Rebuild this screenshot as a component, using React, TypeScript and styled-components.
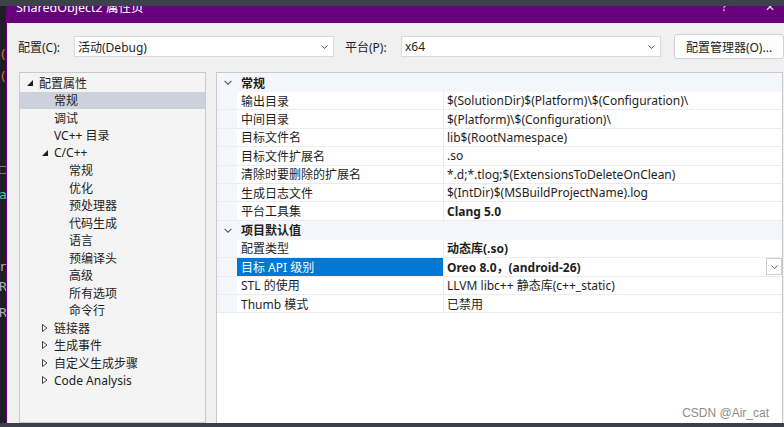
import React from 'react';
import styled, { createGlobalStyle } from 'styled-components';

const GlobalStyle = createGlobalStyle`
  html, body {
    margin: 0;
    padding: 0;
    background: #3b404b;
  }
  body {
    font-family: "Noto Sans", "Noto Sans CJK SC", sans-serif;
    font-size: 12px;
    color: #1e1e1e;
  }
`;

type TreeNode = {
  label: string;
  level: number;
  arrow?: 'open' | 'closed';
  selected?: boolean;
};

const treeItems: TreeNode[] = [
  { label: '配置属性', level: 0, arrow: 'open' },
  { label: '常规', level: 1, selected: true },
  { label: '调试', level: 1 },
  { label: 'VC++ 目录', level: 1 },
  { label: 'C/C++', level: 1, arrow: 'open' },
  { label: '常规', level: 2 },
  { label: '优化', level: 2 },
  { label: '预处理器', level: 2 },
  { label: '代码生成', level: 2 },
  { label: '语言', level: 2 },
  { label: '预编译头', level: 2 },
  { label: '高级', level: 2 },
  { label: '所有选项', level: 2 },
  { label: '命令行', level: 2 },
  { label: '链接器', level: 1, arrow: 'closed' },
  { label: '生成事件', level: 1, arrow: 'closed' },
  { label: '自定义生成步骤', level: 1, arrow: 'closed' },
  { label: 'Code Analysis', level: 1, arrow: 'closed' },
];

type Prop = { name: string; value: string; bold?: boolean; selected?: boolean };
type Section = { title: string; props: Prop[] };

const sections: Section[] = [
  {
    title: '常规',
    props: [
      { name: '输出目录', value: '$(SolutionDir)$(Platform)\\$(Configuration)\\' },
      { name: '中间目录', value: '$(Platform)\\$(Configuration)\\' },
      { name: '目标文件名', value: 'lib$(RootNamespace)' },
      { name: '目标文件扩展名', value: '.so' },
      { name: '清除时要删除的扩展名', value: '*.d;*.tlog;$(ExtensionsToDeleteOnClean)' },
      { name: '生成日志文件', value: '$(IntDir)$(MSBuildProjectName).log' },
      { name: '平台工具集', value: 'Clang 5.0', bold: true },
    ],
  },
  {
    title: '项目默认值',
    props: [
      { name: '配置类型', value: '动态库(.so)', bold: true },
      { name: '目标 API 级别', value: 'Oreo 8.0，(android-26)', bold: true, selected: true },
      { name: 'STL 的使用', value: 'LLVM libc++ 静态库(c++_static)' },
      { name: 'Thumb 模式', value: '已禁用' },
    ],
  },
];

// bits of the code editor that peek out behind the dialog
const editorGlyphs = [
  { ch: '(', top: 42, color: '#e0645a' },
  { ch: '(', top: 8, color: '#e0645a' },
  { ch: '□', top: 78, color: '#8a8a8a' },
  { ch: 'a', top: 12, color: '#3ec9b4' },
  { ch: 'r', top: 58, color: '#b0b0b0' },
  { ch: 'R', top: 6, color: '#b0b0b0' },
  { ch: 'R', top: 12, color: '#b0b0b0' },
];

const Chevron = ({ size = 7 }: { size?: number }) => (
  <svg width={size} height={Math.round(size * 0.6)} viewBox="0 0 7 4" fill="none">
    <path d="M0.5 0.5 L3.5 3.5 L6.5 0.5" stroke="#5a5a5a" strokeWidth="1" />
  </svg>
);

const TreeArrow = ({ kind }: { kind: 'open' | 'closed' }) =>
  kind === 'open' ? (
    <svg width="6" height="6" viewBox="0 0 6 6">
      <polygon points="6,0 6,6 0,6" fill="#1e1e1e" />
    </svg>
  ) : (
    <svg width="6" height="8" viewBox="0 0 6 8">
      <polygon points="0.5,0.5 5,4 0.5,7.5" fill="none" stroke="#444" strokeWidth="1" />
    </svg>
  );

export default function App() {
  return (
    <>
      <GlobalStyle />
      <Screen>
        <TopStrip />
        <Middle>
          <EditorStrip>
            {editorGlyphs.map((g, i) => (
              <Glyph key={i} top={g.top} color={g.color}>
                {g.ch}
              </Glyph>
            ))}
          </EditorStrip>
          <Dialog>
            <TitleBar>
              <TitleText>SharedObject2 属性页</TitleText>
              <TitleButtons>
                <span>?</span>
                <span>✕</span>
              </TitleButtons>
            </TitleBar>
            <Body>
              <Toolbar>
                <Label>配置(C):</Label>
                <Combo>
                  <span>活动(Debug)</span>
                  <Chevron />
                </Combo>
                <Label>平台(P):</Label>
                <Combo>
                  <span>x64</span>
                  <Chevron />
                </Combo>
                <Button>配置管理器(O)...</Button>
              </Toolbar>
              <Panels>
                <Tree>
                  {treeItems.map((item, i) => (
                    <TreeRow key={i} level={item.level} selected={item.selected}>
                      <ArrowSlot>{item.arrow && <TreeArrow kind={item.arrow} />}</ArrowSlot>
                      <span>{item.label}</span>
                    </TreeRow>
                  ))}
                </Tree>
                <Grid>
                  {sections.map((section) => (
                    <React.Fragment key={section.title}>
                      <SectionRow>
                        <Margin>
                          <Chevron size={8} />
                        </Margin>
                        <SectionTitle>{section.title}</SectionTitle>
                      </SectionRow>
                      {section.props.map((p) => (
                        <PropRow key={p.name}>
                          <Margin />
                          <NameCell selected={p.selected}>{p.name}</NameCell>
                          <ValueCell bold={p.bold}>
                            <span>{p.value}</span>
                            {p.selected && (
                              <DropButton>
                                <Chevron />
                              </DropButton>
                            )}
                          </ValueCell>
                        </PropRow>
                      ))}
                    </React.Fragment>
                  ))}
                </Grid>
              </Panels>
              <Watermark>CSDN @Air_cat</Watermark>
            </Body>
          </Dialog>
        </Middle>
        <BottomStrip />
      </Screen>
    </>
  );
}

const Screen = styled.div`
  width: 784px;
  height: 427px;
  display: flex;
  flex-direction: column;
  overflow: hidden;
`;

const TopStrip = styled.div`
  height: 6px;
  background: #3c414c;
  flex-shrink: 0;
`;

const BottomStrip = styled.div`
  height: 4px;
  background: #3a3f4a;
  flex-shrink: 0;
`;

const Middle = styled.div`
  flex: 1;
  display: flex;
  min-height: 0;
`;

const EditorStrip = styled.div`
  width: 6px;
  background: #1f1e25;
  display: flex;
  flex-direction: column;
  overflow: hidden;
  font-family: "DejaVu Sans Mono", monospace;
  font-size: 13px;
  line-height: 14px;
`;

const Glyph = styled.span<{ top: number; color: string }>`
  margin-top: ${({ top }) => top}px;
  color: ${({ color }) => color};
  margin-left: -1px;
`;

const Dialog = styled.div`
  flex: 1;
  display: flex;
  flex-direction: column;
  border-left: 1px solid #68007e;
  min-width: 0;
`;

const TitleBar = styled.div`
  height: 17px;
  background: #68007e;
  display: flex;
  overflow: hidden;
  color: #ffffff;
  flex-shrink: 0;
`;

const TitleText = styled.div`
  margin-left: 9px;
  margin-top: -5px;
  line-height: 14px;
  font-size: 12.5px;
`;

const TitleButtons = styled.div`
  margin-left: auto;
  margin-top: -6px;
  display: flex;
  gap: 38px;
  padding-right: 9px;
  font-size: 12px;
  line-height: 14px;
  color: #e8d8ee;
`;

const Body = styled.div`
  flex: 1;
  background: #f0f0f0;
  display: flex;
  flex-direction: column;
  position: relative;
  overflow: hidden;
`;

const Toolbar = styled.div`
  display: flex;
  align-items: center;
  height: 25px;
  margin-top: 11px;
  padding-left: 11px;
`;

const Label = styled.span`
  width: 56px;
  flex-shrink: 0;
  white-space: nowrap;
`;

const Combo = styled.div`
  width: 260px;
  height: 21px;
  box-sizing: border-box;
  background: #ffffff;
  border: 1px solid #dadada;
  display: flex;
  align-items: center;
  justify-content: space-between;
  padding: 0 5px 0 3px;
  margin-right: 11px;
`;

const Button = styled.div`
  width: 110px;
  height: 25px;
  box-sizing: border-box;
  margin-left: 2px;
  background: #fdfdfd;
  border: 1px solid #d0d0d0;
  border-radius: 3px;
  display: flex;
  align-items: center;
  justify-content: center;
  white-space: nowrap;
`;

const Panels = styled.div`
  display: flex;
  gap: 10px;
  margin-top: 13px;
  padding-left: 12px;
  height: 380px;
`;

const Tree = styled.div`
  width: 187px;
  box-sizing: border-box;
  background: #f4f4f4;
  border: 1px solid #c9c9c9;
  padding-top: 1px;
  flex-shrink: 0;
`;

const TreeRow = styled.div<{ level: number; selected?: boolean }>`
  height: 17.5px;
  display: flex;
  align-items: center;
  padding-left: ${({ level }) => 7 + level * 15}px;
  background: ${({ selected }) => (selected ? '#cdd1dc' : 'transparent')};
  white-space: nowrap;
`;

const ArrowSlot = styled.span`
  width: 12px;
  display: flex;
  align-items: center;
  flex-shrink: 0;
`;

const Grid = styled.div`
  width: 567px;
  box-sizing: border-box;
  background: #ffffff;
  border: 1px solid #c9c9c9;
  border-bottom: none;
  flex-shrink: 0;
`;

const SectionRow = styled.div`
  height: 19px;
  display: flex;
  align-items: center;
  background: #f4f6fb;
`;

const SectionTitle = styled.span`
  font-weight: 700;
  padding-left: 4px;
`;

const PropRow = styled.div`
  height: 18.4px;
  box-sizing: border-box;
  display: flex;
  border-bottom: 1px solid #ececec;
`;

const Margin = styled.div`
  width: 20px;
  flex-shrink: 0;
  align-self: stretch;
  background: #f4f6fb;
  display: flex;
  align-items: center;
  justify-content: center;
  padding-left: 2px;
  box-sizing: border-box;
`;

const NameCell = styled.div<{ selected?: boolean }>`
  width: 207px;
  flex-shrink: 0;
  box-sizing: border-box;
  padding-left: 4px;
  display: flex;
  align-items: center;
  white-space: nowrap;
  background: ${({ selected }) => (selected ? '#0078d7' : '#ffffff')};
  color: ${({ selected }) => (selected ? '#ffffff' : '#1e1e1e')};
  border-right: 1px solid #ececec;
`;

const ValueCell = styled.div<{ bold?: boolean }>`
  flex: 1;
  display: flex;
  align-items: center;
  padding-left: 3px;
  white-space: nowrap;
  font-weight: ${({ bold }) => (bold ? 700 : 400)};
`;

const DropButton = styled.div`
  margin-left: auto;
  width: 16px;
  height: 17px;
  box-sizing: border-box;
  border: 1px solid #cfcfcf;
  background: #ffffff;
  display: flex;
  align-items: center;
  justify-content: center;
`;

const Watermark = styled.div`
  position: absolute;
  right: 15px;
  bottom: 3px;
  font-family: "Liberation Sans", Arial, sans-serif;
  font-size: 12px;
  color: #8c8c8c;
`;
